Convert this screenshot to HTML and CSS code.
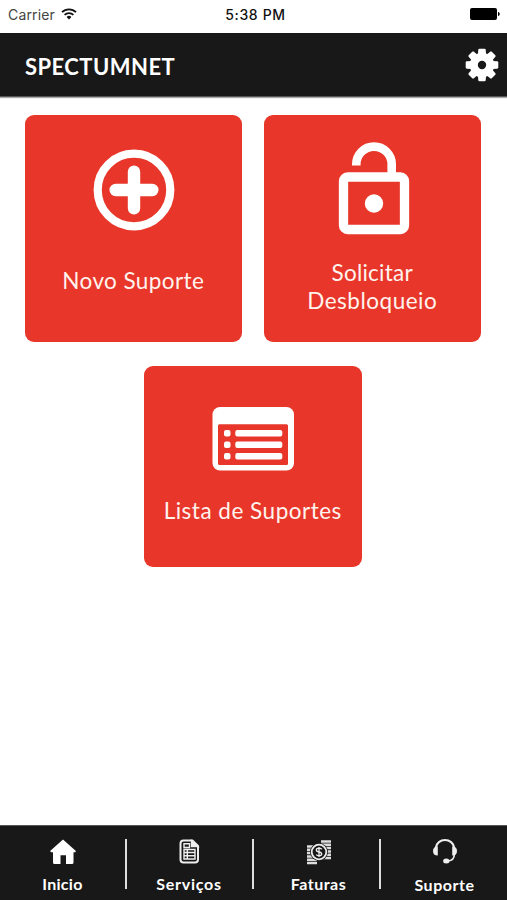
FILE: index.html
```html
<!DOCTYPE html>
<html lang="pt-BR">
<head>
<meta charset="utf-8">
<title>SPECTUMNET</title>
<link rel="stylesheet" href="styles.css">
</head>
<body>
<div class="status">
  <div class="carrier"><span>Carrier</span>
    <svg width="16" height="12" viewBox="0 0 16 12" fill="none" stroke="#111" stroke-width="1.8"><path d="M1 4.2a10 10 0 0 1 14 0M3.6 6.9a6.3 6.3 0 0 1 8.8 0"/><path d="M8 11.4L5.6 9a3.4 3.4 0 0 1 4.8 0z" fill="#111" stroke="none"/></svg>
  </div>
  <span class="time">5:38 PM</span>
  <svg class="battery" width="30" height="12" viewBox="0 0 30 12"><rect width="27" height="12" rx="2"/><path d="M28 4c2.300 .6 2.300 3.400 0 4z"/></svg>
</div>
<header class="header">
  <h1><span class="title">SPECTUMNET</span></h1>
  <svg class="gear" width="34" height="34" viewBox="-17 -17 34 34" fill="#fff">
    <defs><path id="tooth" d="M-4.100-10L-3.700-15.200Q-3.600-16.300-2.500-16.300H2.500Q3.600-16.300 3.700-15.200L4.100-10z"/></defs>
    <circle r="8.200" fill="none" stroke="#fff" stroke-width="8"/>
    <use href="#tooth"/><use href="#tooth" transform="rotate(45)"/><use href="#tooth" transform="rotate(90)"/><use href="#tooth" transform="rotate(135)"/><use href="#tooth" transform="rotate(180)"/><use href="#tooth" transform="rotate(225)"/><use href="#tooth" transform="rotate(270)"/><use href="#tooth" transform="rotate(315)"/>
  </svg>
</header>
<main class="cards">
  <a class="card novo">
    <svg width="82" height="82" viewBox="0 0 82 82" fill="none" stroke="#fff"><circle cx="41" cy="41" r="36.300" stroke-width="8.200"/><path d="M41 22.700v36.600M22.700 41h36.600" stroke-width="12.400" stroke-linecap="round"/></svg>
    <span class="label l-novo">Novo Suporte</span>
  </a>
  <a class="card lock">
    <svg width="72" height="94" viewBox="0 0 72 94" fill="none" stroke="#fff"><rect x="5.500" y="35" width="61" height="52.500" rx="4" stroke-width="9.300"/><path d="M18.300 23.500V22.300a17.700 17.700 0 0 1 35.400 0V33" stroke-width="8.600"/><circle cx="36" cy="61.500" r="9.200" fill="#fff" stroke="none"/></svg>
    <span class="label l-sol">Solicitar</span><span class="label l-des">Desbloqueio</span>
  </a>
  <a class="card list">
    <svg width="82" height="64" viewBox="0 0 82 64" fill="#fff"><rect x=".5" width="81.500" height="63.500" rx="7.500"/><rect x="6" y="17.300" width="70" height="40.700" rx="1.500" fill="#e8372a"/><g><rect x="12" y="23" width="6.500" height="6.500" rx="2"/><rect x="12" y="34.500" width="6.500" height="6.500" rx="2"/><rect x="12" y="46" width="6.500" height="6.500" rx="2"/><rect x="23.300" y="23" width="47" height="6.500" rx="2"/><rect x="23.300" y="34.500" width="47" height="6.500" rx="2"/><rect x="23.300" y="46" width="47" height="6.500" rx="2"/></g></svg>
    <span class="label l-lista">Lista de Suportes</span>
  </a>
</main>
<nav class="tabs">
  <a class="tab inicio"><svg width="28" height="28" viewBox="0 0 28 28" fill="#fff"><path d="M14 1.500L1.400 12.800Q1.200 14.300 2.500 14.300H4V24.500Q4 26 5.500 26H11.500V17.300H17V26H23Q24.500 26 24.500 24.500V14.300H26Q27.200 14.300 26.600 12.800z"/></svg><span>Inicio</span></a>
  <a class="tab servicos"><svg width="28" height="28" viewBox="0 0 28 28" fill="none" stroke="#eee" stroke-width="1.400"><path d="M8.500 2.500H17.500L23 8V21.500Q23 24.500 20 24.500H8.500Q5.500 24.500 5.500 21.500V5.500Q5.500 2.500 8.500 2.500z" stroke-width="2"/><path d="M16.500 2.500V8.500H23z" fill="#eee"/><path d="M9 5.800H14.500V9.500H9zM9 11.500H20V21H9zM9 14.500H20M9 17.800H20M12.300 11.500V21"/></svg><span>Serviços</span></a>
  <a class="tab faturas"><svg width="28" height="28" viewBox="0 0 28 28" fill="none"><path d="M2 8.500h10M2 11.800h10M2 15.100h10M2 18.400h10M2 21.700h10M2 25h10M16 3.500h10M16 6.800h10M16 10.100h10M16 13.400h10M16 16.700h10M16 20h10" stroke="#ddd" stroke-width="2.500"/><circle cx="14" cy="14" r="9" fill="#181818"/><circle cx="14" cy="14" r="7.300" stroke="#eee" stroke-width="1.800"/><path d="M16.800 11.300Q15.700 10.200 14 10.200 11.300 10.200 11.300 12 11.300 13.600 14 14 16.700 14.400 16.700 16 16.700 17.800 14 17.800 12.200 17.800 11.200 16.600M14 9V19" stroke="#eee" stroke-width="1.300"/></svg><span>Faturas</span></a>
  <a class="tab suporte"><svg width="28" height="28" viewBox="0 0 28 28" fill="none" stroke="#eee"><path d="M4.500 10.500C6-.8 22-.8 23.500 10.500" stroke-width="2"/><path d="M6.800 8.500V17.500Q2 17.500 2 13T6.800 8.500zM21.200 8.500V17.500Q26 17.500 26 13T21.200 8.500z" fill="#eee" stroke="none"/><path d="M23.400 16Q23.200 22.500 17 23" stroke-width="1.700"/><ellipse cx="15.300" cy="23" rx="3.200" ry="2.500" fill="#eee" stroke="none"/></svg><span>Suporte</span></a>
</nav>
</body>
</html>
```
FILE: styles.css
```css
* { box-sizing: border-box; }
body {
  margin: 0;
  width: 507px;
  height: 900px;
  display: flex;
  flex-direction: column;
  overflow: hidden;
  background: #fff;
  font-family: Lato, "Liberation Sans", sans-serif;
}
svg { display: block; flex: none; }
.status {
  height: 33px;
  padding: 0 7px 5px 8px;
  display: grid;
  grid-template-columns: 1fr auto 1fr;
  align-items: center;
  font-family: Inter, sans-serif;
  font-size: 14px;
  color: #222;
}
.carrier { display: flex; align-items: center; gap: 6px; }
.carrier span { color: #444; letter-spacing: 0.15px; }
.time { color: #111; font-weight: 500; letter-spacing: 0.65px; margin-left: 3px; }
.battery { justify-self: end; }
.header {
  height: 64px;
  padding: 0 8px 0 25px;
  display: flex;
  align-items: center;
  justify-content: space-between;
  background: #181818;
  border-bottom: 1px solid #555;
  box-shadow: 0 1px 1px #aaa;
}
.gear { margin-top: 1px; }
h1 {
  margin: 4px 0 0;
  color: #fff;
  font-size: 22px;
  line-height: 28px;
  font-weight: 700;
  letter-spacing: 0.45px;
}
.cards {
  flex: 1;
  padding: 18px 26px 0 24.500px;
  display: grid;
  grid-template-columns: 217.500px 217.500px;
  grid-template-rows: 226.500px 201px;
  justify-content: space-between;
  row-gap: 24.500px;
}
.card {
  border-radius: 9px;
  background: #e8372a;
  display: flex;
  flex-direction: column;
  align-items: center;
}
.novo { padding-top: 34px; }
.novo svg { margin-left: 2px; }
.lock { padding-top: 27px; }
.lock svg { margin-left: 3px; }
.list { grid-column: 1 / 3; justify-self: center; width: 217.500px; padding-top: 41px; }
.label {
  color: #fff3ee;
  font-size: 22.500px;
  line-height: 28px;
  white-space: nowrap;
}
.l-novo { margin-top: 36px; letter-spacing: 0.4px; }
.l-sol { margin-top: 23px; letter-spacing: 0.25px; }
.l-des { letter-spacing: 0.5px; }
.l-lista { margin-top: 26px; letter-spacing: 0.5px; }
.tabs {
  height: 75px;
  display: grid;
  grid-template-columns: 125px 127px 127px 128px;
  background: #181818;
  border-top: 1px solid #555;
}
.tab {
  height: 50px;
  margin-top: 13px;
  display: flex;
  flex-direction: column;
  align-items: center;
  color: #fff;
  font-size: 16px;
  line-height: 20px;
  font-weight: 700;
  letter-spacing: 0.5px;
}
.tab svg { margin-top: -1px; }
.tab + .tab { border-left: 2px solid #ddd; }
.tab span { margin-top: 8px; white-space: nowrap; }
.inicio { letter-spacing: 0.3px; }
.servicos { letter-spacing: 0.75px; padding-right: 1px; }
.faturas { padding-left: 4px; }
.suporte { letter-spacing: 0.55px; padding-left: 1px; }
.suporte span { margin-top: 9px; }
```
